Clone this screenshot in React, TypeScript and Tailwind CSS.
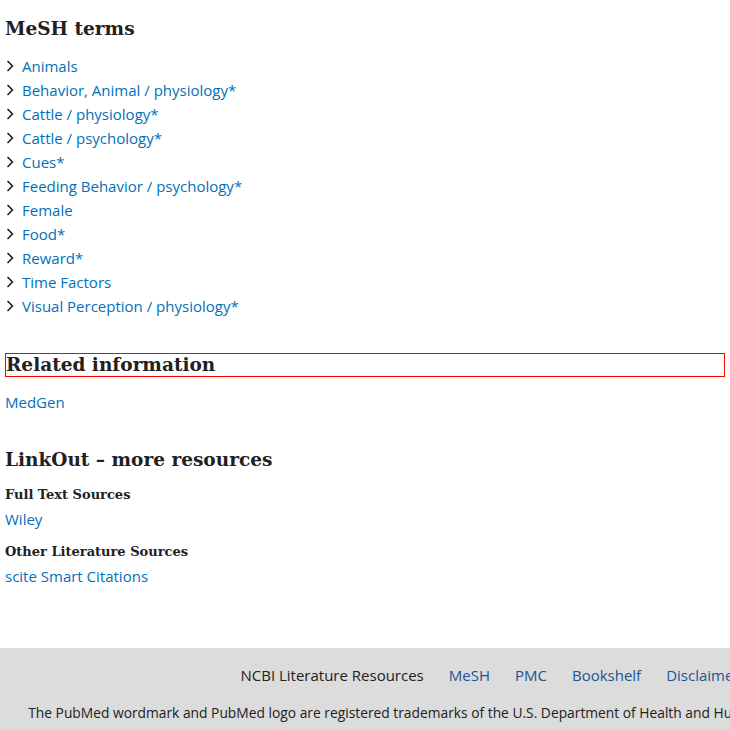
const meshTerms = [
  "Animals",
  "Behavior, Animal / physiology*",
  "Cattle / physiology*",
  "Cattle / psychology*",
  "Cues*",
  "Feeding Behavior / psychology*",
  "Female",
  "Food*",
  "Reward*",
  "Time Factors",
  "Visual Perception / physiology*",
];

const footerLinks = ["MeSH", "PMC", "Bookshelf", "Disclaimer"];

const serif = "font-['DejaVu_Serif',serif]";

function Chevron() {
  return (
    <svg width="10" height="14" viewBox="0 0 10 14" className="shrink-0">
      <path d="M2.5 2 L7.5 7 L2.5 12" fill="none" stroke="#1f1f1f" strokeWidth="1.6" />
    </svg>
  );
}

export default function App() {
  return (
    <div className="w-full overflow-x-hidden bg-white font-['Open_Sans',sans-serif] text-[#212121]">
      <div className="px-[5px] pt-[16px]">
        <h2 className={`${serif} text-[18.5px] font-bold leading-[26px] text-[#212121]`}>MeSH terms</h2>
        <ul className="mt-[12px]">
          {meshTerms.map((term) => (
            <li key={term} className="flex items-center gap-[7px] h-[24px]">
              <Chevron />
              <a href="#" className="text-[15px] text-[#0071bc]">
                {term}
              </a>
            </li>
          ))}
        </ul>

        <h2
          className={`${serif} mt-[35px] border border-[#ff0000] text-[18.5px] font-bold leading-[22px] text-[#212121]`}
        >
          Related information
        </h2>
        <a href="#" className="mt-[14px] block text-[15px] leading-[22px] text-[#0071bc]">
          MedGen
        </a>

        <h2 className={`${serif} mt-[34px] text-[18.5px] font-bold leading-[26px] text-[#212121]`}>
          LinkOut – more resources
        </h2>
        <h3 className={`${serif} mt-[12px] text-[13px] font-bold leading-[20px]`}>Full Text Sources</h3>
        <a href="#" className="mt-[3px] block text-[15px] leading-[22px] text-[#0071bc]">
          Wiley
        </a>
        <h3 className={`${serif} mt-[12px] text-[13px] font-bold leading-[20px]`}>Other Literature Sources</h3>
        <a href="#" className="mt-[3px] block text-[15px] leading-[22px] text-[#0071bc]">
          scite Smart Citations
        </a>
      </div>

      <footer className="mt-[61px] bg-[#dcdcdc]">
        <div className="w-[980px] px-[17px] pt-[16px] pb-[20px]">
          <div className="flex justify-center gap-[25px] text-[15px] leading-[22px]">
            <span className="text-[#212121]">NCBI Literature Resources</span>
            {footerLinks.map((l) => (
              <a key={l} href="#" className="text-[#205493]">
                {l}
              </a>
            ))}
          </div>
          <p className="mt-[14px] text-center text-[13.8px] leading-[25px] text-[#212121]">
            The PubMed wordmark and PubMed logo are registered trademarks of the U.S. Department of Health and Human
            Services (HHS). Unauthorized use of these marks is strictly prohibited.
          </p>
        </div>
      </footer>
    </div>
  );
}
